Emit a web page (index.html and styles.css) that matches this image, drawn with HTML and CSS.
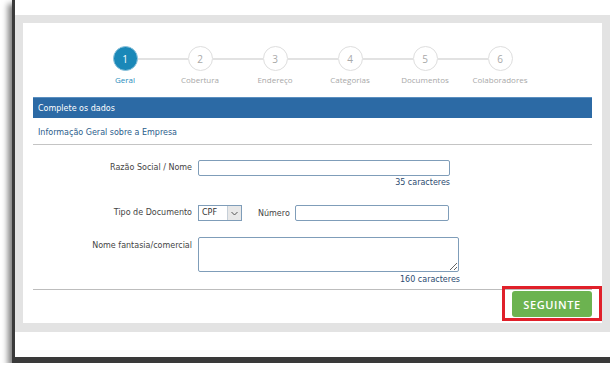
FILE: index.html
```html
<!DOCTYPE html>
<html lang="pt">
<head>
    <meta charset="UTF-8">
    <meta name="viewport" content="width=device-width, initial-scale=1.0">
    <title>Cadastro da Empresa</title>
    <link rel="stylesheet" href="styles.css">
</head>
<body>
<div class="window">
    <div class="frame">
        <div class="card">
            <div class="steps">
                <div class="circles">
                    <span class="circle active">1</span>
                    <span class="link"></span>
                    <span class="circle">2</span>
                    <span class="link"></span>
                    <span class="circle">3</span>
                    <span class="link"></span>
                    <span class="circle">4</span>
                    <span class="link"></span>
                    <span class="circle">5</span>
                    <span class="link"></span>
                    <span class="circle">6</span>
                </div>
                <div class="labels">
                    <span class="label active">Geral</span>
                    <span class="label">Cobertura</span>
                    <span class="label">Endereço</span>
                    <span class="label">Categorias</span>
                    <span class="label">Documentos</span>
                    <span class="label">Colaboradores</span>
                </div>
            </div>

            <div class="panel-title">Complete os dados</div>
            <div class="section-title">Informação Geral sobre a Empresa</div>

            <form class="company-form">
                <div class="form-row">
                    <label for="razao">Razão Social / Nome</label>
                    <div class="field">
                        <input type="text" id="razao" class="text-input wide">
                        <span class="counter">35 caracteres</span>
                    </div>
                </div>
                <div class="form-row doc-row">
                    <label for="tipo">Tipo de Documento</label>
                    <div class="field inline">
                        <div class="select" id="tipo">
                            <span class="select-value">CPF</span>
                            <span class="select-arrow">
                                <svg width="7" height="5" viewBox="0 0 7 5"><path d="M0.5 1 L3.5 4 L6.5 1" fill="none" stroke="#555" stroke-width="1"/></svg>
                            </span>
                        </div>
                        <label for="numero" class="inline-label">Número</label>
                        <input type="text" id="numero" class="text-input number">
                    </div>
                </div>
                <div class="form-row area-row">
                    <label for="fantasia">Nome fantasia/comercial</label>
                    <div class="field">
                        <textarea id="fantasia" class="text-area"></textarea>
                        <span class="counter">160 caracteres</span>
                    </div>
                </div>
            </form>

            <div class="form-footer">
                <div class="next-wrap">
                    <button type="button" class="next-btn">SEGUINTE</button>
                    <span class="highlight"></span>
                </div>
            </div>
        </div>
    </div>
</div>
</body>
</html>
```

FILE: styles.css
```css
body {
    margin: 0;
    padding: 0;
    background-color: #ffffff;
    font-family: "DejaVu Sans", Verdana, sans-serif;
    overflow: hidden;
}

/* janela capturada */
.window {
    margin-left: 12px;
    height: 342px;
    padding-top: 15px;
    background-color: #ffffff;
    border-left: 3px solid #3a3a3a;
    border-bottom: 6px solid #3a3a3a;
    box-shadow: -4px 4px 6px rgba(0, 0, 0, 0.5);
}

.frame {
    background-color: #e3e3e3;
    padding: 8px 8px 9px 8px;
}

.card {
    background-color: #ffffff;
    padding: 23px 10px 6px 10px;
}

/* passos */
.steps {
    display: flex;
    flex-direction: column;
    align-items: center;
}

.circles {
    display: flex;
    align-items: center;
}

.circle {
    width: 23px;
    height: 23px;
    border: 1px solid #dedede;
    border-radius: 50%;
    background-color: #ffffff;
    color: #a9a9a9;
    font-family: "Open Sans", sans-serif;
    font-size: 10px;
    display: flex;
    align-items: center;
    justify-content: center;
}

.circle.active {
    background-color: #1a88b8;
    border-color: #8dc3dc;
    color: #ffffff;
}

.link {
    width: 50px;
    height: 2px;
    background-color: #e2e2e2;
}

.labels {
    display: flex;
    margin-top: 3px;
}

.label {
    width: 75px;
    text-align: center;
    font-family: "Open Sans", sans-serif;
    font-size: 8px;
    line-height: 11px;
    color: #a8a8a8;
}

.label.active {
    color: #2a8cbc;
}

/* barra azul */
.panel-title {
    margin-top: 12px;
    height: 21px;
    line-height: 21px;
    padding-left: 5px;
    background-color: #2c6aa5;
    border-top: 1px solid #5b8fc0;
    box-sizing: border-box;
    color: #ffffff;
    font-size: 8px;
}

.section-title {
    padding: 8px 0 4px 5px;
    line-height: 14px;
    font-size: 8px;
    color: #2b5d8c;
    border-bottom: 1px solid #c4c4c4;
}

/* formulario */
.company-form {
    padding-top: 15px;
}

.form-row {
    display: grid;
    grid-template-columns: 159px auto;
    column-gap: 6px;
    align-items: start;
}

.form-row > label {
    text-align: right;
    font-size: 8px;
    line-height: 16px;
    color: #444444;
}

.field {
    display: flex;
    flex-direction: column;
    align-items: flex-end;
    width: fit-content;
}

.field.inline {
    flex-direction: row;
    align-items: center;
}

.text-input {
    height: 16px;
    border: 1px solid #7f9db9;
    border-radius: 2px;
    box-sizing: border-box;
    padding: 0 3px;
    margin: 0;
}

.text-input.wide {
    width: 252px;
}

.text-input.number {
    width: 154px;
}

.counter {
    margin-top: 2px;
    font-size: 8px;
    line-height: 10px;
    color: #2c4a70;
}

.doc-row {
    margin-top: 17px;
}

.select {
    width: 44px;
    height: 16px;
    border: 1px solid #7f9db9;
    box-sizing: border-box;
    display: flex;
    align-items: stretch;
}

.select-value {
    flex: 1;
    font-size: 8px;
    line-height: 13px;
    padding-left: 3px;
    color: #333333;
}

.select-arrow {
    width: 13px;
    background-color: #e8e8e8;
    border-left: 1px solid #c6cfd8;
    display: flex;
    align-items: center;
    justify-content: center;
}

.inline-label {
    margin-left: 16px;
    margin-right: 5px;
    font-size: 8px;
    color: #444444;
}

.area-row {
    margin-top: 16px;
}

.area-row > label {
    padding-top: 1px;
}

.text-area {
    width: 261px;
    height: 35px;
    border: 1px solid #7f9db9;
    border-radius: 2px;
    box-sizing: border-box;
    margin: 0;
    resize: vertical;
}

.area-row .counter {
    margin-top: 3px;
    margin-right: -1px;
}

/* rodape */
.form-footer {
    margin-top: 4px;
    border-top: 1px solid #bdbdbd;
    padding-top: 1px;
    display: flex;
    justify-content: flex-end;
}

.next-wrap {
    position: relative;
}

.next-btn {
    width: 80px;
    height: 26px;
    border: none;
    border-radius: 3px;
    background-color: #6cb350;
    color: #ffffff;
    font-family: "Open Sans", sans-serif;
    font-weight: 600;
    font-size: 11px;
    letter-spacing: 0.6px;
    display: block;
    cursor: pointer;
}

/* destaque vermelho em volta do botão */
.highlight {
    position: absolute;
    left: -10px;
    top: -5px;
    width: 100px;
    height: 35px;
    border: 3px solid #e0202a;
    box-sizing: border-box;
}
```
